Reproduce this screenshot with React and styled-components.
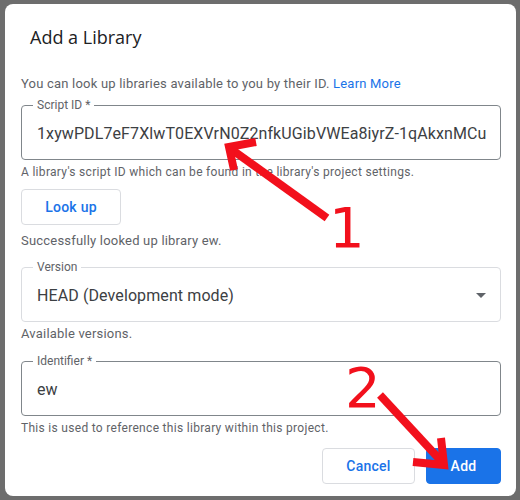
import React from "react";
import styled, { createGlobalStyle } from "styled-components";

const GlobalStyle = createGlobalStyle`
  html, body {
    margin: 0;
    background: #6d6d6d;
  }
  body {
    font-family: Roboto, "Liberation Sans", Arial, sans-serif;
  }
`;

const Page = styled.div`
  position: relative;
  width: 520px;
  height: 500px;
  padding: 4px 4px 4px 5px;
  box-sizing: border-box;
`;

const Dialog = styled.div`
  width: 511px;
  height: 492px;
  background: #fff;
  border-radius: 8px;
  box-sizing: border-box;
  padding: 0 15px 0 16px;
  overflow: hidden;
`;

const Title = styled.h2`
  margin: 0;
  padding: 21px 0 0 9px;
  font-family: "Open Sans", Roboto, sans-serif;
  font-size: 18px;
  font-weight: 400;
  line-height: 24px;
  color: #202124;
`;

const Text = styled.p`
  margin: ${(p) => p.$mt || 0}px 0 0;
  font-size: ${(p) => p.$size || 13}px;
  line-height: 16px;
  color: #5f6368;
  letter-spacing: ${(p) => (p.$size === 12 ? "0.3px" : "0.2px")};
`;

const Link = styled.a`
  color: #1a73e8;
  text-decoration: none;
`;

const Field = styled.fieldset`
  margin: ${(p) => p.$mt}px 0 0;
  padding: 0 15px;
  border: 1px solid ${(p) => (p.$light ? "#dadce0" : "#80868b")};
  border-radius: 4px;
  min-width: 0;
`;

const Legend = styled.legend`
  margin-left: -4px;
  padding: 0 4px;
  font-size: 12px;
  line-height: 14px;
  color: #5f6368;
`;

const Value = styled.div`
  display: flex;
  align-items: center;
  justify-content: space-between;
  height: 42px;
  padding-bottom: 5px;
  font-size: 16px;
  letter-spacing: 0.1px;
  color: #3c4043;
  white-space: nowrap;
`;

const Caret = styled.span`
  width: 0;
  height: 0;
  margin-right: -1px;
  border-left: 5px solid transparent;
  border-right: 5px solid transparent;
  border-top: 5px solid #5f6368;
`;

const Button = styled.button`
  display: block;
  box-sizing: border-box;
  height: 36px;
  width: ${(p) => p.$w}px;
  border-radius: 4px;
  border: 1px solid ${(p) => (p.$primary ? "#1a73e8" : "#dadce0")};
  background: ${(p) => (p.$primary ? "#1a73e8" : "#fff")};
  color: ${(p) => (p.$primary ? "#fff" : "#1a73e8")};
  font-family: Roboto, sans-serif;
  font-size: 14px;
  font-weight: 500;
  letter-spacing: 0.25px;
  padding: 0;
`;

const LookUp = styled(Button)`
  margin-top: 9px;
`;

const Actions = styled.div`
  display: flex;
  justify-content: flex-end;
  gap: 11px;
  margin-top: 12px;
`;

const Overlay = styled.svg`
  position: absolute;
  left: 0;
  top: 0;
  pointer-events: none;
`;

const Num = styled.text`
  font-family: "DejaVu Sans", sans-serif;
  font-size: 56px;
  fill: #f2101c;
`;

export default function App() {
  return (
    <Page>
      <GlobalStyle />
      <Dialog>
        <Title>Add a Library</Title>
        <Text $mt={27}>
          You can look up libraries available to you by their ID.{" "}
          <Link href="#">Learn More</Link>
        </Text>
        <Field $mt={6}>
          <Legend>Script ID *</Legend>
          <Value>1xywPDL7eF7XlwT0EXVrN0Z2nfkUGibVWEa8iyrZ-1qAkxnMCu</Value>
        </Field>
        <Text $size={12} $mt={4}>
          A library's script ID which can be found in the library's project settings.
        </Text>
        <LookUp $w={100}>Look up</LookUp>
        <Text $mt={8}>Successfully looked up library ew.</Text>
        <Field $mt={11} $light>
          <Legend>Version</Legend>
          <Value>
            HEAD (Development mode)
            <Caret />
          </Value>
        </Field>
        <Text $mt={4}>Available versions.</Text>
        <Field $mt={12}>
          <Legend>Identifier *</Legend>
          <Value>ew</Value>
        </Field>
        <Text $size={12} $mt={4}>
          This is used to reference this library within this project.
        </Text>
        <Actions>
          <Button $w={93}>Cancel</Button>
          <Button $w={75} $primary>Add</Button>
        </Actions>
      </Dialog>
      <Overlay width="520" height="500" viewBox="0 0 520 500">
        <g stroke="#f2101c" strokeWidth="8" fill="none" strokeLinecap="butt">
          <line x1="327" y1="218" x2="231" y2="149" />
          <polyline points="256,142 229,147 234,170" />
          <line x1="380" y1="395" x2="443" y2="463" />
          <polyline points="413,462 444,465 441,438" />
        </g>
        <Num x="329" y="247">1</Num>
        <Num x="345" y="407">2</Num>
      </Overlay>
    </Page>
  );
}
